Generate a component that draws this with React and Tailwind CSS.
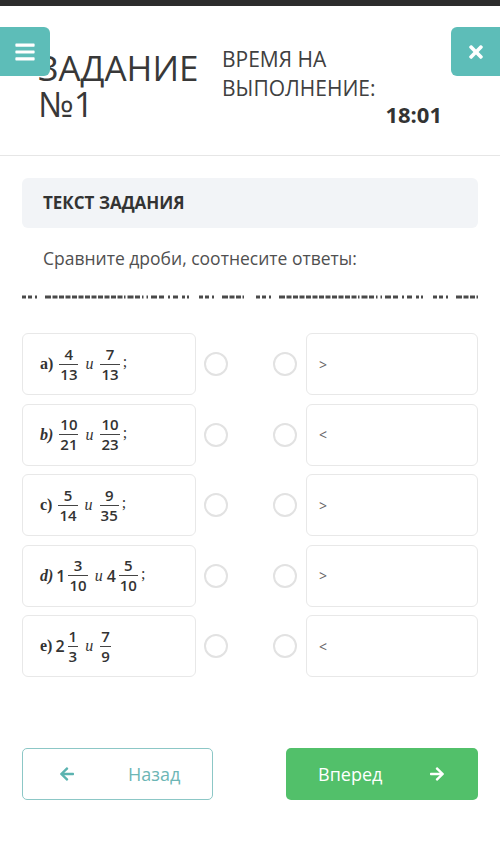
import React from "react";
import { FaBars, FaTimes, FaArrowLeft, FaArrowRight } from "react-icons/fa";

const Frac = ({ n, d }) => (
  <span className="inline-flex flex-col items-center mx-[3px] font-semibold text-[15px] leading-[15px] font-['Open_Sans',sans-serif]">
    <span className="px-[1px] pb-[2px]">{n}</span>
    <span className="w-full border-t border-[#444]" />
    <span className="px-[1px] pt-[2px]">{d}</span>
  </span>
);

const Label = ({ children, italic }) => (
  <span
    className={
      "font-['Liberation_Serif',serif] text-[16px] font-bold mr-[3px] " +
      (italic ? "italic" : "")
    }
  >
    {children}
  </span>
);

const And = () => (
  <span className="font-['Liberation_Serif',serif] italic text-[16px] mx-[4px]">и</span>
);

const Semi = () => <span className="font-['Liberation_Serif',serif] text-[16px] -mt-[4px]">;</span>;

const Whole = ({ children }) => (
  <span className="font-semibold text-[16px] font-['Open_Sans',sans-serif]">{children}</span>
);

const rows = [
  {
    left: (
      <>
        <Label>a)</Label>
        <Frac n="4" d="13" />
        <And />
        <Frac n="7" d="13" />
        <Semi />
      </>
    ),
    right: ">",
  },
  {
    left: (
      <>
        <Label italic>b)</Label>
        <Frac n="10" d="21" />
        <And />
        <Frac n="10" d="23" />
        <Semi />
      </>
    ),
    right: "<",
  },
  {
    left: (
      <>
        <Label>c)</Label>
        <Frac n="5" d="14" />
        <And />
        <Frac n="9" d="35" />
        <Semi />
      </>
    ),
    right: ">",
  },
  {
    left: (
      <>
        <Label italic>d)</Label>
        <Whole>1</Whole>
        <Frac n="3" d="10" />
        <And />
        <Whole>4</Whole>
        <Frac n="5" d="10" />
        <Semi />
      </>
    ),
    right: ">",
  },
  {
    left: (
      <>
        <Label>e)</Label>
        <Whole>2</Whole>
        <Frac n="1" d="3" />
        <And />
        <Frac n="7" d="9" />
      </>
    ),
    right: "<",
  },
];

// underline of the hidden answer slots, drawn as an irregular dash run
const Dashes = () => (
  <svg width="222" height="4" className="block">
    <line
      x1="0"
      y1="2"
      x2="222"
      y2="2"
      stroke="#4a4a4a"
      strokeWidth="3"
      strokeDasharray="4 2 4 3 2 8 6 1.5 5 1.5 5 1.5 5 1.5 5 1.5 5 1.5 5 1.5 5 1.5 5 1.5 5 1.5 5 1.5 5 1.5 1.5 2 6 1.5 5 2 1.5 3 1.5 3 6 2 5 4 2 3 5 4 3 2 2 10"
    />
  </svg>
);

const Radio = ({ className }) => (
  <div className={"w-[24px] h-[24px] rounded-full border-[2.5px] border-[#e2e2e2] bg-white shrink-0 " + className} />
);

export default function App() {
  return (
    <div className="w-[500px] min-h-[857px] bg-white font-['Open_Sans',sans-serif] text-[#3a3a3a]">
      <div className="h-[6px] bg-[#2c2c2c]" />

      <div className="relative h-[150px] border-b border-[#e6e6e6]">
        <div className="flex items-start">
          <div className="w-[222px] shrink-0 pl-[38px] pt-[44px] text-[35px] leading-[36px] text-[#383838]">
            <div>ЗАДАНИЕ</div>
            <div>№1</div>
          </div>
          <div className="w-[220px] shrink-0 pt-[39px]">
            <div className="text-[21px] leading-[29px] text-[#404040]">
              <div>ВРЕМЯ НА</div>
              <div>ВЫПОЛНЕНИЕ:</div>
            </div>
            <div className="text-right text-[22px] leading-[24px] font-bold text-[#333] mt-[-1px]">18:01</div>
          </div>
        </div>

        <button className="absolute left-0 top-[21px] w-[50px] h-[49px] rounded-r-[6px] bg-[#5dbdb8] flex items-center justify-center text-white">
          <FaBars className="w-[24px] h-[22px]" />
        </button>
        <button className="absolute right-0 top-[21px] w-[49px] h-[49px] rounded-l-[6px] bg-[#5dbdb8] flex items-center justify-center text-white">
          <FaTimes className="w-[20px] h-[20px]" />
        </button>
      </div>

      <div className="px-[22px]">
        <div className="mt-[22px] h-[50px] rounded-[6px] bg-[#f2f4f7] pl-[21px] flex items-center">
          <span className="text-[17px] font-bold text-[#333]">ТЕКСТ ЗАДАНИЯ</span>
        </div>

        <p className="mt-[18px] pl-[21px] text-[17.5px] leading-[24px] text-[#505050]">
          Сравните дроби, соотнесите ответы:
        </p>

        <div className="mt-[25px] flex justify-between">
          <Dashes />
          <Dashes />
        </div>

        <div className="mt-[34px] flex flex-col gap-[8.5px]">
          {rows.map((r, i) => (
            <div key={i} className="flex items-center">
              <div className="w-[174px] h-[62px] rounded-[6px] border border-[#e8e8e8] bg-white flex items-center pl-[17px] text-[#333]">
                {r.left}
              </div>
              <Radio className="ml-[8px]" />
              <Radio className="ml-[45px]" />
              <div className="ml-[9px] flex-1 h-[62px] rounded-[6px] border border-[#e8e8e8] bg-white flex items-center pl-[12px] text-[14px] text-[#666]">
                {r.right}
              </div>
            </div>
          ))}
        </div>

        <div className="mt-[71px] flex justify-between">
          <button className="w-[191px] h-[52px] rounded-[5px] border-[1.5px] border-[#8cc7c6] bg-white flex items-center pl-[35px] text-[#6db6b5]">
            <FaArrowLeft className="w-[18px] h-[16px] text-[#5bb3b0]" />
            <span className="ml-[52px] text-[18px]">Назад</span>
          </button>
          <button className="w-[192px] h-[52px] rounded-[5px] bg-[#52c06a] flex items-center justify-between px-[32px] text-white">
            <span className="text-[18px]">Вперед</span>
            <FaArrowRight className="w-[18px] h-[16px]" />
          </button>
        </div>
      </div>
    </div>
  );
}
